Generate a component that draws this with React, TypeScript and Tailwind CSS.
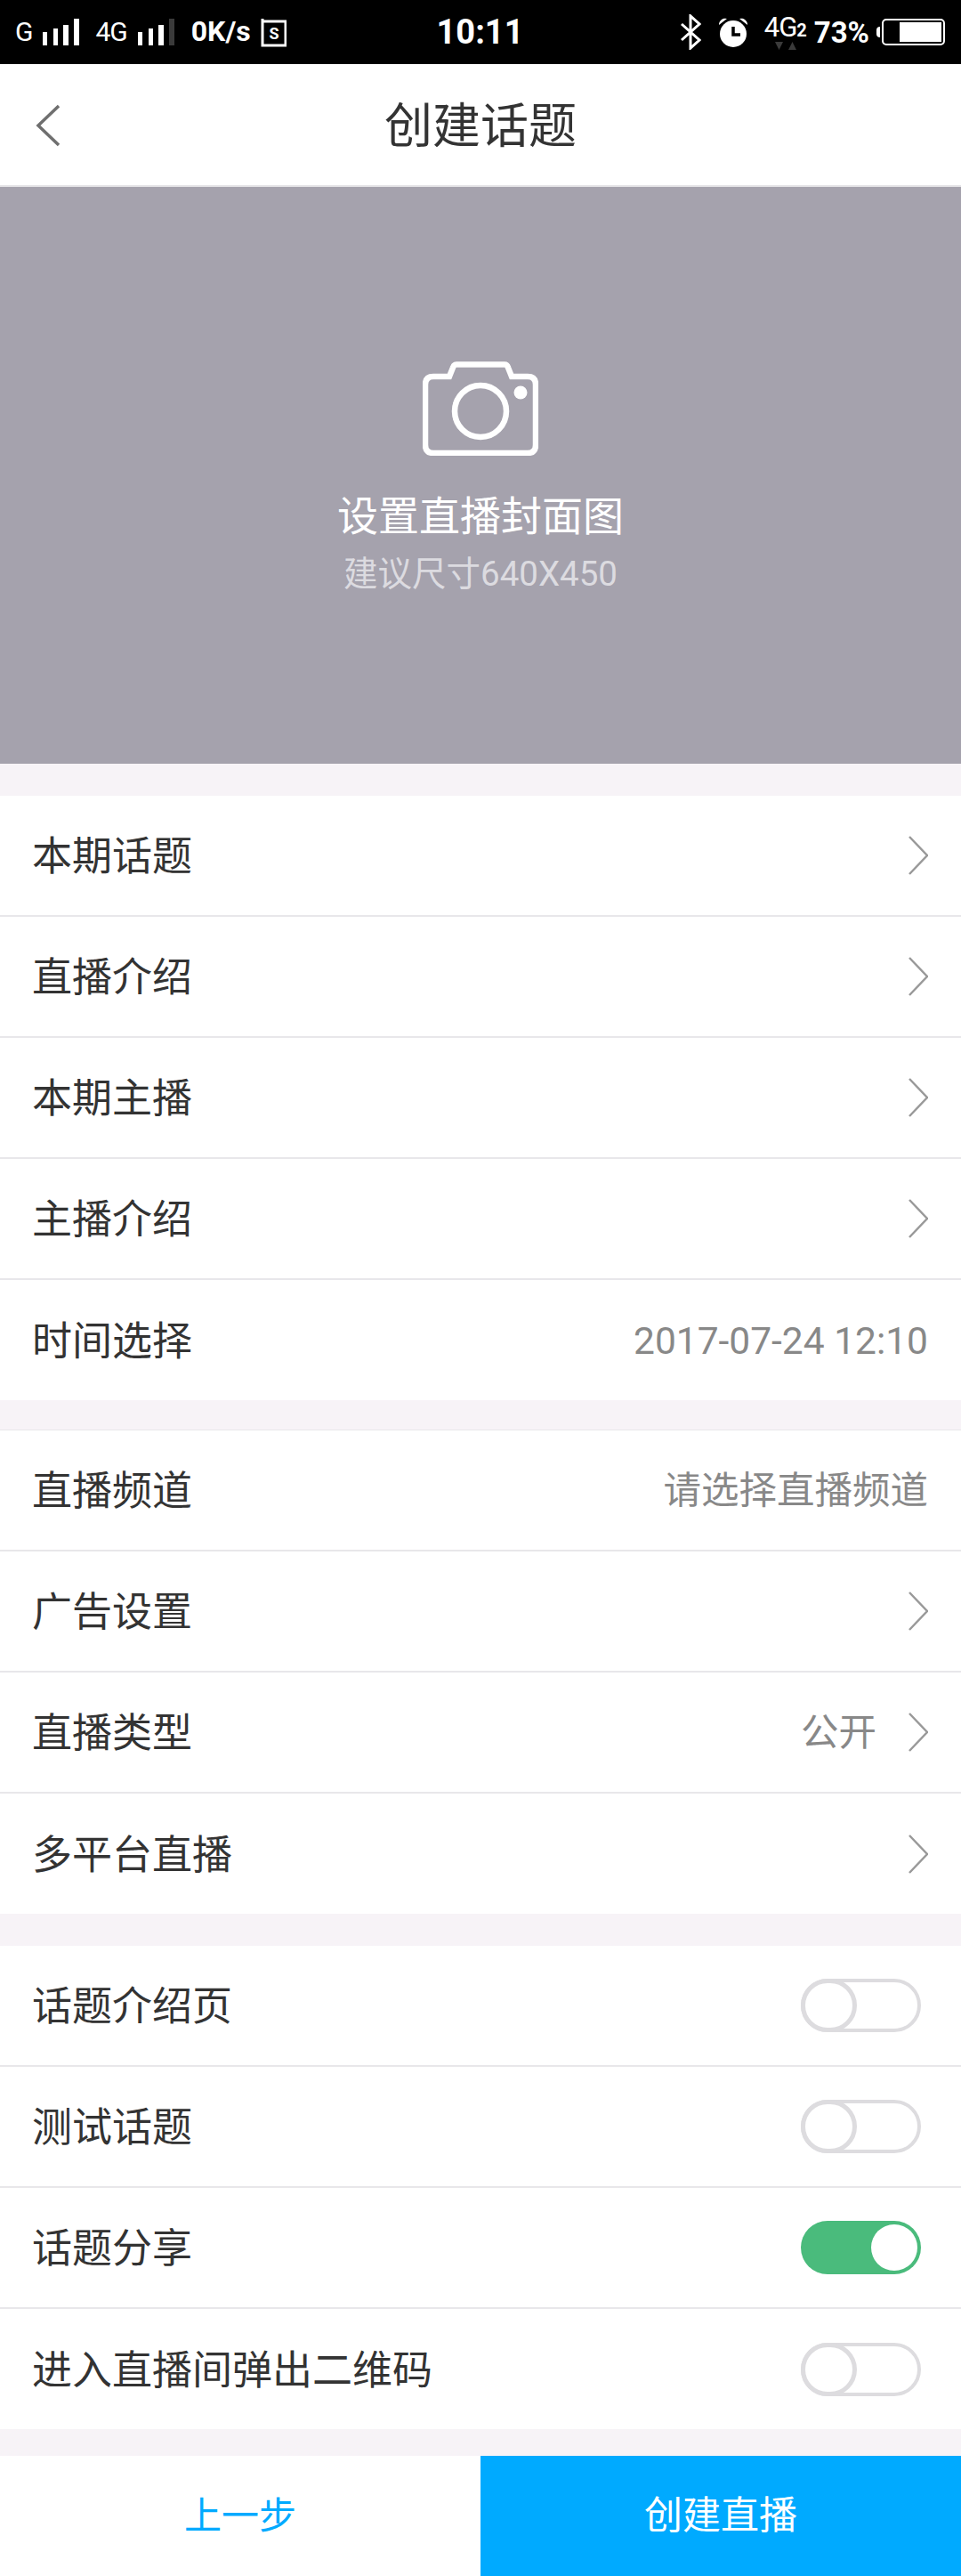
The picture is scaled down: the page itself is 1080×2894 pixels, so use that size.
const CJK = "font-['Roboto','Noto_Sans_CJK_SC',sans-serif]";

function Bars({ dim }: { dim?: boolean }) {
  return (
    <svg width="42" height="32" viewBox="0 0 42 32" className="block">
      <rect x="1" y="16" width="5" height="15" fill="#fff" />
      <rect x="13" y="12" width="5" height="19" fill="#fff" />
      <rect x="24" y="8" width="6" height="23" fill="#fff" />
      <rect x="36" y="1" width="6" height="30" fill={dim ? "#3a3a3a" : "#fff"} />
    </svg>
  );
}

function StatusBar() {
  return (
    <div className="flex h-[72px] items-center bg-black pl-[17px] pr-[18px] text-white font-['Roboto',sans-serif]">
      <div className="flex flex-1 items-center">
        <span className="text-[30px] leading-none">G</span>
        <span className="ml-[10px]"><Bars /></span>
        <span className="ml-[18px] text-[30px] leading-none tracking-[-1px]">4G</span>
        <span className="ml-[11px]"><Bars dim /></span>
        <span className="ml-[19px] -mt-[3px] text-[32px] font-bold leading-none">0K/s</span>
        <svg width="29" height="34" viewBox="0 0 29 34" className="ml-[11px] block">
          <path d="M2 2v30h26V5H3" fill="none" stroke="#fff" strokeWidth="3" />
          <text x="15" y="25" textAnchor="middle" fontSize="18" fontWeight="700" fill="#fff">S</text>
        </svg>
      </div>
      <span className="text-[38px] font-bold leading-none">10:11</span>
      <div className="flex flex-1 items-center justify-end">
        <svg width="24" height="40" viewBox="0 0 24 40" className="block">
          <path d="M2 11l20 18-10 9V2l10 9L2 29" fill="none" stroke="#fff" strokeWidth="3" />
        </svg>
        <svg width="34" height="36" viewBox="0 0 34 36" className="ml-[19px] block">
          <circle cx="17" cy="20" r="15" fill="#fff" />
          <path d="M17 12v9h8" fill="none" stroke="#000" strokeWidth="3.500" />
          <path d="M1 10a7 7 0 0 1 9-7zM33 10a7 7 0 0 0-9-7z" fill="#fff" />
        </svg>
        <div className="relative ml-[18px] h-[40px] w-[48px]">
          <span className="absolute left-0 -top-[1px] text-[31px] leading-none tracking-[-1px]">4G</span>
          <span className="absolute right-0 top-[8px] text-[20px] font-bold leading-none">2</span>
          <svg width="24" height="9" viewBox="0 0 24 9" className="absolute left-[12px] top-[31px] block">
            <path d="M0 0h9L4.500 9zM15 9h9L19.500 0z" fill="#3a3a3a" />
          </svg>
        </div>
        <span className="ml-[8px] text-[33px] font-bold leading-none">73%</span>
        <div className="ml-[8px] h-[12px] w-[4px] rounded-l-full bg-white" />
        <div className="ml-[2px] flex h-[30px] w-[71px] justify-end rounded-[5px] border-2 border-white p-[2px]">
          <div className="h-full w-[47px] bg-white" />
        </div>
      </div>
    </div>
  );
}

function NavBar() {
  return (
    <div className="relative flex h-[138px] items-center justify-center border-b-2 border-[#e4e3e6] bg-white">
      <svg width="28" height="48" viewBox="0 0 28 48" className="absolute left-[40px] top-[45px] block">
        <path d="M26 2L3 24l23 22" fill="none" stroke="#6f6f6f" strokeWidth="3.500" />
      </svg>
      <span className={`${CJK} pt-[6px] text-[54px] leading-none text-[#333]`}>创建话题</span>
    </div>
  );
}

function Cover() {
  return (
    <div className={`${CJK} flex h-[648px] flex-col items-center bg-[#a5a2ad] pt-[196px]`}>
      <svg width="130" height="106" viewBox="0 0 130 106" className="block">
        <path
          d="M12 17h18l4-10q1-3.500 4-3.500h54q3 0 4 3.500l4 10h18q9 0 9 9v68q0 9-9 9H12q-9 0-9-9V26q0-9 9-9z"
          fill="none"
          stroke="#fff"
          strokeWidth="6.500"
        />
        <circle cx="65" cy="56" r="29" fill="none" stroke="#fff" strokeWidth="6.500" />
        <circle cx="110" cy="35" r="7.500" fill="#fff" />
      </svg>
      <span className="mt-[45px] text-[46px] leading-none text-white">设置直播封面图</span>
      <span className="mt-[23px] text-[38.500px] leading-none text-[#dcdbe0]">建议尺寸640X450</span>
    </div>
  );
}

function Chevron() {
  return (
    <svg width="22" height="44" viewBox="0 0 22 44" className="block">
      <path d="M1 1l20 21L1 43" fill="none" stroke="#999" strokeWidth="2.500" />
    </svg>
  );
}

function Toggle({ on }: { on?: boolean }) {
  if (on) {
    return (
      <div className="flex h-[60px] w-[135px] justify-end rounded-full bg-[#4abb7c] p-[4px]">
        <div className="h-[52px] w-[52px] rounded-full bg-white" />
      </div>
    );
  }
  return (
    <div className="h-[60px] w-[135px] rounded-full border-4 border-[#dddcdf]">
      <div className="-ml-[4px] -mt-[4px] h-[60px] w-[63px] rounded-full border-[5px] border-[#dddcdf]" />
    </div>
  );
}

function Row({ label, value, arrow, toggle, last }: {
  label: string;
  value?: string;
  arrow?: boolean;
  toggle?: "on" | "off";
  last?: boolean;
}) {
  return (
    <div
      className={`flex items-center justify-between bg-white pl-[36px] ${
        last ? "h-[135px]" : "h-[136px] border-b-2 border-[#e8e7ea]"
      } ${toggle ? "pr-[45px]" : "pr-[37px]"}`}
    >
      <span className="pt-[3px] text-[45px] leading-none text-[#333]">{label}</span>
      <div className="flex items-center">
        {value && <span className="pt-[3px] text-[42.500px] leading-none text-[#888]">{value}</span>}
        {arrow && <span className={value ? "ml-[36px]" : ""}><Chevron /></span>}
        {toggle && <Toggle on={toggle === "on"} />}
      </div>
    </div>
  );
}

export default function App() {
  return (
    <div className={`${CJK} flex h-[2894px] w-[1080px] flex-col bg-[#f7f3f7]`}>
      <StatusBar />
      <NavBar />
      <Cover />

      <div className="mt-[36px]">
        <Row label="本期话题" arrow />
        <Row label="直播介绍" arrow />
        <Row label="本期主播" arrow />
        <Row label="主播介绍" arrow />
        <Row label="时间选择" value="2017-07-24 12:10" last />
      </div>

      <div className="mt-[33px] border-t border-[#e8e7ea]">
        <Row label="直播频道" value="请选择直播频道" />
        <Row label="广告设置" arrow />
        <Row label="直播类型" value="公开" arrow />
        <Row label="多平台直播" arrow last />
      </div>

      <div className="mt-[36px]">
        <Row label="话题介绍页" toggle="off" />
        <Row label="测试话题" toggle="off" />
        <Row label="话题分享" toggle="on" />
        <Row label="进入直播间弹出二维码" toggle="off" last />
      </div>

      <div className="mt-[30px] flex h-[135px]">
        <button className="flex-1 bg-white text-[42px] leading-none text-[#00aaff]">上一步</button>
        <button className="flex-1 bg-[#00aaff] text-[43px] leading-none text-white">创建直播</button>
      </div>
    </div>
  );
}
